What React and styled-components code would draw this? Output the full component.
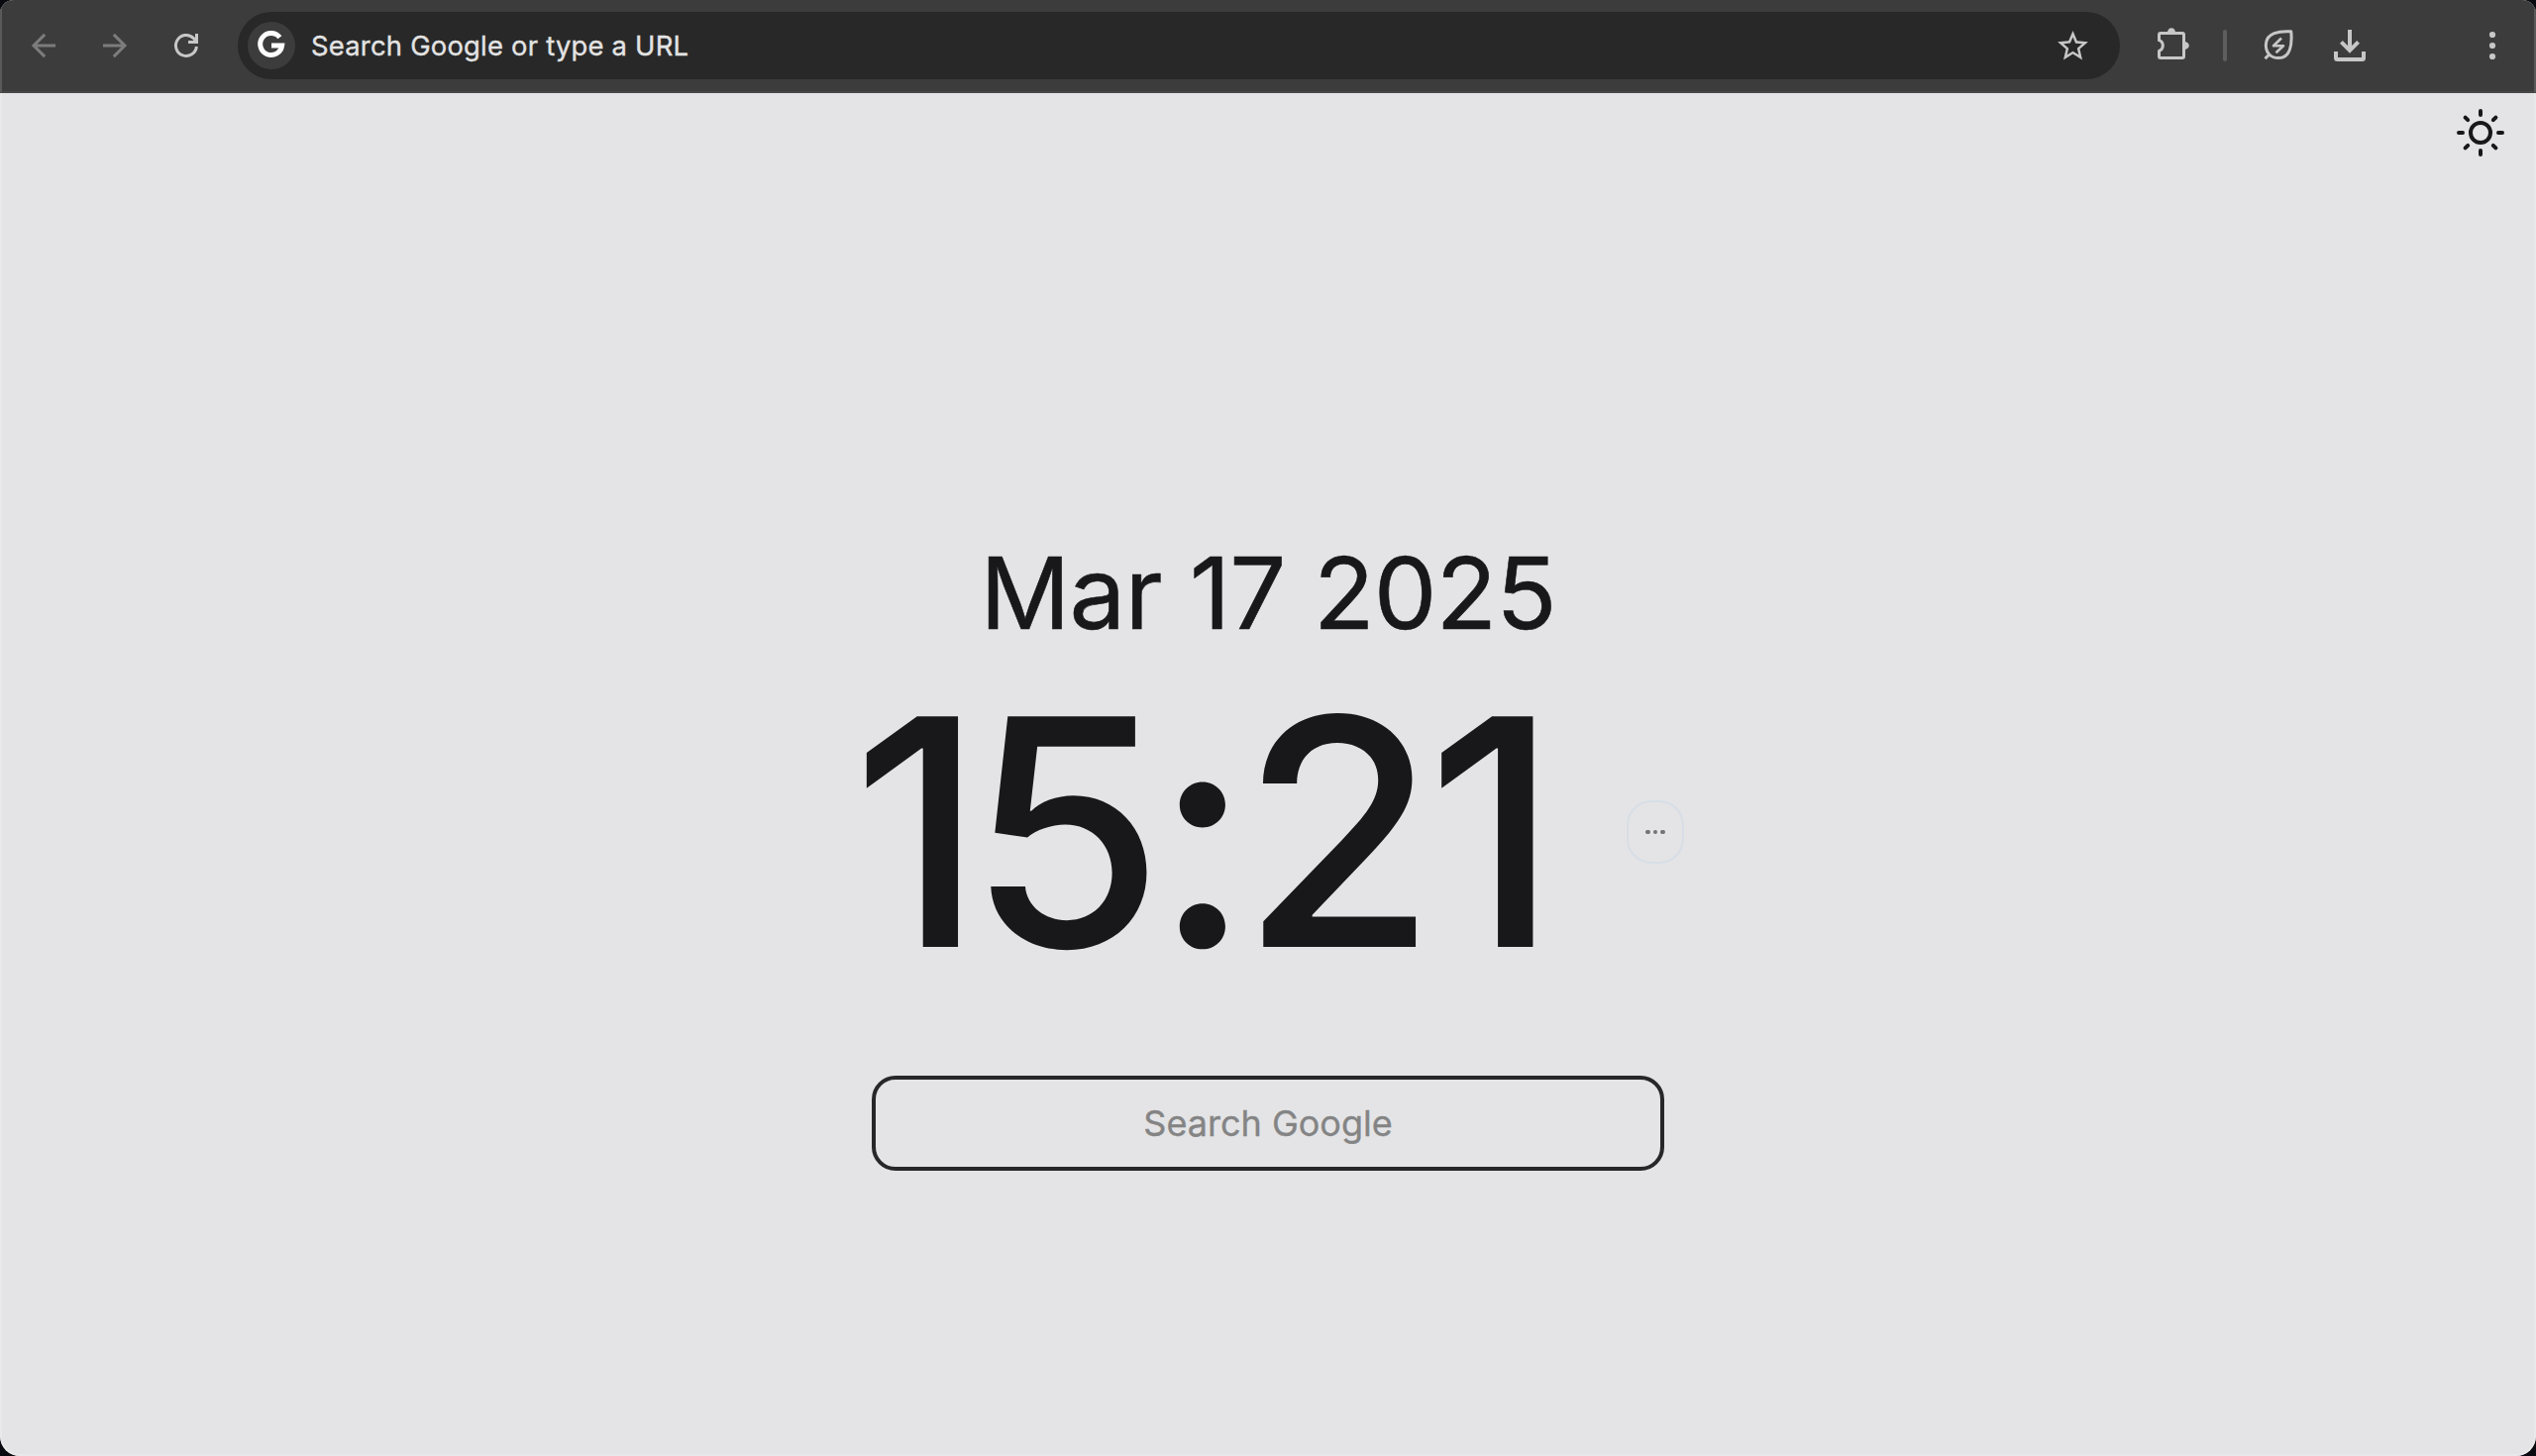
import React from "react";
import styled, { createGlobalStyle } from "styled-components";

const GlobalStyle = createGlobalStyle`
  *, *::before, *::after { box-sizing: border-box; }
  body {
    margin: 0;
    background: #0a0b10;
    font-family: Inter, "Liberation Sans", sans-serif;
    -webkit-font-smoothing: antialiased;
  }
  button { border: 0; padding: 0; background: none; font: inherit; }
`;

const Window = styled.div`
  display: flex;
  flex-direction: column;
  height: 1470px;
  overflow: hidden;
  border-radius: 14px 14px 20px 20px;
  background: #e4e4e6;
`;

const Toolbar = styled.header`
  display: flex;
  align-items: center;
  height: 94px;
  flex: none;
  padding: 0 18px;
  background: #3c3c3c;
  border: 2px solid #5a5a5a;
  border-top: 0;
  border-bottom-color: #464646;
`;

const ToolButton = styled.button`
  display: flex;
  align-items: center;
  justify-content: center;
  flex: none;
  width: 48px;
  height: 48px;
  margin-right: ${({ $gap }) => $gap || 0}px;
  color: ${({ $dim }) => ($dim ? "#7c7c7c" : "#c7c7c7")};
`;

const Omnibox = styled.div`
  display: flex;
  align-items: center;
  width: 1900px;
  height: 68px;
  flex: none;
  margin-right: 28px;
  padding: 0 24px 0 10px;
  border-radius: 34px;
  background: #282828;
`;

const EngineBadge = styled.span`
  display: flex;
  align-items: center;
  justify-content: center;
  width: 48px;
  height: 48px;
  border-radius: 50%;
  background: #3c3c3c;
`;

const OmniboxText = styled.span`
  flex: 1;
  margin-left: 16px;
  color: #e3e3e3;
  font-size: 27.4px;
  line-height: 34px;
  letter-spacing: 0.22px;
  -webkit-text-stroke: 0.35px #e3e3e3;
  white-space: nowrap;
`;

const Divider = styled.span`
  flex: none;
  width: 4px;
  height: 32px;
  margin: 0 28px;
  border-radius: 2px;
  background: #5e5e5e;
`;

const Spacer = styled.span`
  flex: 1;
`;

const Page = styled.main`
  display: flex;
  flex-direction: column;
  align-items: center;
  flex: 1;
  color: #18181a;
  border: 2px solid #e9e9ea;
  border-top: 0;
  border-radius: 0 0 20px 20px;
`;

const ThemeBar = styled.div`
  display: flex;
  justify-content: flex-end;
  align-self: stretch;
  padding: 16px 30px 0 0;
`;

const ThemeButton = styled.button`
  display: flex;
  width: 48px;
  height: 48px;
  color: #18181a;
`;

const DateText = styled.div`
  margin-top: 380px;
  font-size: 101px;
  line-height: 120px;
  letter-spacing: -0.9px;
  word-spacing: 1px;
  -webkit-text-stroke: 0.6px #18181a;
  white-space: nowrap;
`;

const ClockRow = styled.div`
  display: flex;
  align-items: center;
  justify-content: space-between;
  width: 840px;
  height: 320px;
  margin-top: 22px;
`;

const Clock = styled.div`
  font-size: 320px;
  font-weight: 500;
  line-height: 320px;
  letter-spacing: -0.03em;
  white-space: nowrap;
`;

const LeadDigit = styled.span`
  letter-spacing: -0.049em;
`;

const MoreButton = styled.button`
  display: flex;
  align-items: center;
  justify-content: center;
  gap: 3px;
  width: 58px;
  height: 64px;
  border: 2px solid #d8dee6;
  border-radius: 25px;
`;

const Dot = styled.i`
  width: 4.4px;
  height: 4.4px;
  border-radius: 50%;
  background: #737375;
`;

const SearchInput = styled.input`
  width: 800px;
  height: 96px;
  margin-top: 86px;
  padding: 0 24px;
  border: 4px solid #27272a;
  border-radius: 24px;
  outline: 0;
  background: transparent;
  font: 400 36px Inter, "Liberation Sans", sans-serif;
  text-align: center;
  &::placeholder { color: #848485; opacity: 1; -webkit-text-stroke: 0.35px #848485; }
`;

const Stroke = ({ size = 48, width = 3, cap = "butt", join = "miter", children }) => (
  <svg width={size} height={size} viewBox={`0 0 ${size} ${size}`} fill="none"
    stroke="currentColor" strokeWidth={width} strokeLinecap={cap} strokeLinejoin={join}>
    {children}
  </svg>
);

const BackIcon = () => (
  <Stroke><path d="M36 24H14M25.2 12.9 14 24l11.2 11.1" /></Stroke>
);
const ForwardIcon = () => (
  <Stroke><path d="M12 24h22M22.8 12.9 34 24 22.8 35.1" /></Stroke>
);
const ReloadIcon = () => (
  <Stroke>
    <path d="M34.4 25A10.5 10.5 0 1 1 31.4 16.6L34 19.5" />
    <path d="M34.5 12v8.5H26" />
  </Stroke>
);
const GoogleIcon = () => (
  <svg width="48" height="48" viewBox="0 0 48 48" fill="none" stroke="#fff" strokeWidth="5">
    <path d="M32.4 15.8A11 11 0 1 0 34.6 24.1H24" />
  </svg>
);
const StarIcon = () => (
  <svg width="37" height="37" viewBox="0 0 24 24" fill="currentColor">
    <path d="m22 9.24-7.19-.62L12 2 9.19 8.63 2 9.24l5.46 4.73L5.82 21 12 17.27 18.18 21l-1.63-7.03L22 9.24zM12 15.4l-3.76 2.27 1-4.28-3.32-2.88 4.38-.38L12 6.1l1.71 4.04 4.38.38-3.32 2.88 1 4.28L12 15.4z" />
  </svg>
);
const PuzzleIcon = () => (
  <Stroke join="round">
    <path d="M13 11.5H35A1.5 1.5 0 0 1 36.5 13V35A1.5 1.5 0 0 1 35 36.5H13A1.5 1.5 0 0 1 11.5 35V29.3A5.6 5.6 0 0 0 11.5 18.7V13A1.5 1.5 0 0 1 13 11.5Z" />
    <path d="M20 11A4 4.8 0 0 1 28 11ZM37 20A4.8 4 0 0 1 37 28Z" fill="currentColor" stroke="none" />
  </Stroke>
);
const LeafIcon = () => (
  <Stroke join="round">
    <path d="M36.8 9.8C25 9 11.5 11 11.3 23.5C11.2 31.2 16.5 36.6 24 36.6C36 36.6 38 23 36.8 9.8Z" />
    <path d="m10.5 37.2 5-5" />
    <path d="M27 16.5 19 24.3h10L21.5 31.2" strokeWidth="2.6" />
  </Stroke>
);
const DownloadIcon = () => (
  <Stroke width={4}>
    <path d="M24 8v21M15.4 20.4 24 29l8.6-8.6" />
    <path d="M10 30v6.5A1.5 1.5 0 0 0 11.5 38h25A1.5 1.5 0 0 0 38 36.5V30" />
  </Stroke>
);
const MenuIcon = () => (
  <svg width="48" height="48" viewBox="0 0 48 48" fill="currentColor">
    <circle cx="24" cy="13" r="3.1" /><circle cx="24" cy="24" r="3.1" /><circle cx="24" cy="35" r="3.1" />
  </svg>
);
const SunIcon = () => (
  <Stroke width={4} cap="round">
    <circle cx="24" cy="24" r="10" />
    <path d="M24 2v4M24 42v4M2 24h4M42 24h4M8.6 8.6l2.6 2.6M36.8 36.8l2.6 2.6M8.6 39.4l2.6-2.6M36.8 11.2l2.6-2.6" />
  </Stroke>
);

export default function App() {
  return (
    <>
      <GlobalStyle />
      <Window>
        <Toolbar>
          <ToolButton $dim $gap={24} aria-label="Back"><BackIcon /></ToolButton>
          <ToolButton $dim $gap={24} aria-label="Forward"><ForwardIcon /></ToolButton>
          <ToolButton $gap={28} aria-label="Reload"><ReloadIcon /></ToolButton>
          <Omnibox>
            <EngineBadge><GoogleIcon /></EngineBadge>
            <OmniboxText>Search Google or type a URL</OmniboxText>
            <ToolButton aria-label="Bookmark"><StarIcon /></ToolButton>
          </Omnibox>
          <ToolButton aria-label="Extensions"><PuzzleIcon /></ToolButton>
          <Divider />
          <ToolButton $gap={24} aria-label="Energy saver"><LeafIcon /></ToolButton>
          <ToolButton aria-label="Downloads"><DownloadIcon /></ToolButton>
          <Spacer />
          <ToolButton aria-label="Menu"><MenuIcon /></ToolButton>
        </Toolbar>
        <Page>
          <ThemeBar>
            <ThemeButton aria-label="Theme"><SunIcon /></ThemeButton>
          </ThemeBar>
          <DateText>Mar 17 2025</DateText>
          <ClockRow>
            <Clock><LeadDigit>1</LeadDigit>5:21</Clock>
            <MoreButton aria-label="More"><Dot /><Dot /><Dot /></MoreButton>
          </ClockRow>
          <SearchInput placeholder="Search Google" />
        </Page>
      </Window>
    </>
  );
}
